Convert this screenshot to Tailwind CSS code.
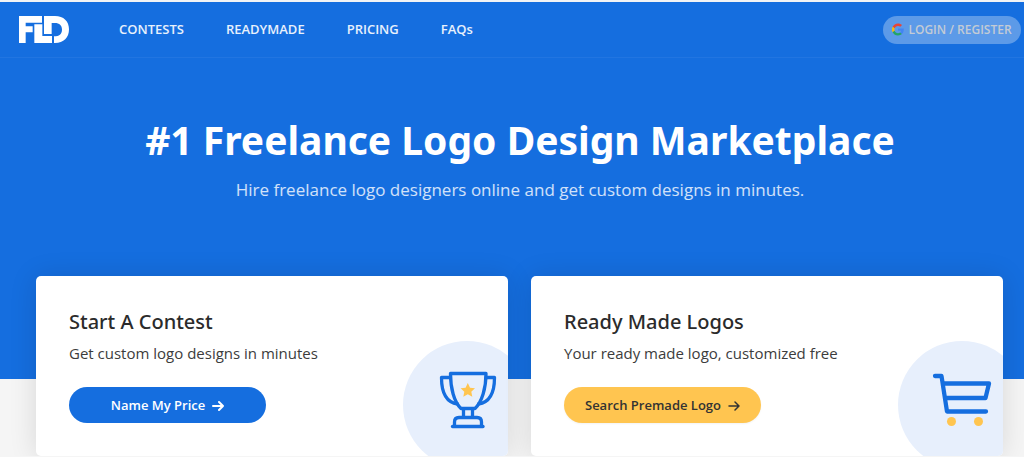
<!DOCTYPE html>
<html lang="en">
<head>
  <meta charset="UTF-8">
  <meta name="viewport" content="width=device-width, initial-scale=1.0">
  <title>#1 Freelance Logo Design Marketplace</title>
  <script src="https://cdn.jsdelivr.net/npm/@tailwindcss/browser@4"></script>
</head>
<body class="bg-[#f5f5f5] font-['Open_Sans','Noto_Sans',sans-serif] text-[#2b2b2b] overflow-x-hidden">
  <div class="bg-[#156edf] border-t-2 border-[#f1f3f5] pb-[103px]">
    <header class="flex items-center h-14 pl-[19px] pr-[3px] border-b border-white/5">
      <a href="#" aria-label="FLD home">
        <svg class="w-[50px] h-[27px]" viewBox="0 0 150 81" fill="#fff" aria-hidden="true">
          <path d="M0 0H69V20H20V31H41V49H20V81H0Z"/>
          <path d="M46 25H70V60H99V81H46Z"/>
          <path d="M75 0H108C134 0 150 16 150 40C150 65 134 81 108 81H105V61C121 61 129 54 129 41C129 28 121 21 108 21H98V54H75Z"/>
        </svg>
      </a>
      <nav class="flex gap-[42px] ml-[50px] text-[13px] font-semibold text-white/90">
        <a href="#">CONTESTS</a>
        <a href="#">READYMADE</a>
        <a href="#">PRICING</a>
        <a href="#">FAQs</a>
      </nav>
      <button type="button" class="flex items-center justify-center gap-1 ml-auto w-[138px] h-7 rounded-full bg-[#5c9ae8] text-xs font-semibold text-[#c3cbd5] whitespace-nowrap">
        <svg class="w-3 h-[13px]" viewBox="0 0 48 48" aria-hidden="true">
          <path fill="#ea4335" d="M24 0C14.600 0 6.500 5.400 2.600 13.200l8 6.200C12.400 13.700 17.700 9.500 24 9.500c3.500 0 6.700 1.200 9.200 3.600l6.900-6.900C35.900 2.400 30.500 0 24 0z"/>
          <path fill="#4285f4" d="M47 24.600c0-1.600-.2-3.100-.4-4.600H24v9h12.900c-.6 3-2.300 5.500-4.800 7.200l7.700 6C44.400 38 47 31.800 47 24.600z"/>
          <path fill="#fbbc05" d="M10.500 28.600c-.5-1.500-.8-3-.8-4.600s.3-3.100.8-4.600l-8-6.200C.9 16.500 0 20.100 0 24s.9 7.500 2.600 10.800z"/>
          <path fill="#23a566" d="M24 48c6.500 0 11.900-2.100 15.900-5.800l-7.700-6c-2.200 1.500-4.900 2.300-8.200 2.300-6.300 0-11.600-4.200-13.500-9.900l-8 6.200C6.500 42.600 14.600 48 24 48z"/>
        </svg>
        LOGIN / REGISTER
      </button>
    </header>

    <section class="pt-[55px] pb-[74px] pl-4 text-center">
      <h1 class="font-['Noto_Sans',sans-serif] text-[39px] leading-[54px] font-bold text-white">#1 Freelance Logo Design Marketplace</h1>
      <p class="mt-[11px] text-[17px] leading-6 text-white/80">Hire freelance logo designers online and get custom designs in minutes.</p>
    </section>
  </div>

  <main class="relative grid grid-cols-2 gap-[23px] -mt-[103px] pl-9 pr-[21px]">
    <section class="relative overflow-hidden rounded-[5px] bg-white px-[33px] pt-8 pb-[33px] shadow-[0_1px_28px_rgba(0,0,0,0.12)]">
      <h2 class="font-['Noto_Sans',sans-serif] text-xl leading-7 font-medium">Start A Contest</h2>
      <p class="mt-[5px] text-[15px] leading-6 text-[#3c3c3c]">Get custom logo designs in minutes</p>
      <button type="button" class="relative z-10 flex items-center justify-center gap-[7px] mt-[22px] w-[197px] h-9 pt-px rounded-full bg-[#156edf] text-[13px] font-semibold text-white">
        Name My Price
        <svg class="w-3 h-3" viewBox="0 0 12 12" fill="none" stroke="currentColor" stroke-width="2" stroke-linecap="round" stroke-linejoin="round" aria-hidden="true">
          <path d="M1 6H11M7 2L11 6L7 10"/>
        </svg>
      </button>
      <!-- trophy badge, cut off by the card edge -->
      <svg class="absolute -right-[23px] -bottom-[13px] w-32 h-32" viewBox="403 341 128 128" fill="none" stroke="#156edf" stroke-width="3.300" stroke-linecap="round" stroke-linejoin="round" aria-hidden="true">
        <circle cx="467" cy="405" r="64" fill="#e7effc" stroke="none"/>
        <path d="M450.500 373.500H486C486 388 482 402 475 408.500H461C454 402 450.500 388 450.500 373.500Z"/>
        <path d="M450 377.500H441.500C441.500 393 447 402.500 457.500 404"/>
        <path d="M486 377.500H494.500C494.500 393 489 402.500 478.500 404"/>
        <path d="M463.500 409V417M472.500 409V417"/>
        <path d="M454.500 426V422C454.500 419 456 417.500 459 417.500H477C480 417.500 481.500 419 481.500 422V426"/>
        <path d="M452.500 426.500H483"/>
        <path fill="#ffc550" stroke="none" d="M467.800 383L470 387.700L475 388.300L471.300 391.800L472.300 396.800L467.800 394.300L463.300 396.800L464.300 391.800L460.600 388.300L465.600 387.700Z"/>
      </svg>
    </section>

    <section class="relative overflow-hidden rounded-[5px] bg-white px-[33px] pt-8 pb-[33px] shadow-[0_1px_28px_rgba(0,0,0,0.12)]">
      <h2 class="font-['Noto_Sans',sans-serif] text-xl leading-7 font-medium">Ready Made Logos</h2>
      <p class="mt-[5px] text-[15px] leading-6 text-[#3c3c3c]">Your ready made logo, customized free</p>
      <button type="button" class="relative z-10 flex items-center justify-center gap-[7px] mt-[22px] w-[197px] h-9 pt-px rounded-full bg-[#ffc550] text-[13px] font-semibold text-[#333] shadow-xs">
        Search Premade Logo
        <svg class="w-3 h-3" viewBox="0 0 12 12" fill="none" stroke="currentColor" stroke-width="1.500" stroke-linecap="round" stroke-linejoin="round" aria-hidden="true">
          <path d="M1 6H11M7 2L11 6L7 10"/>
        </svg>
      </button>
      <!-- cart badge -->
      <svg class="absolute -right-[23px] -bottom-[13px] w-32 h-32" viewBox="898 341 128 128" fill="none" stroke="#156edf" stroke-width="4.300" stroke-linecap="round" stroke-linejoin="round" aria-hidden="true">
        <circle cx="962" cy="405" r="64" fill="#e7effc" stroke="none"/>
        <path d="M935 376H941.500L947 411.500H986"/>
        <path d="M944 383.500H989L985.500 398H946.500"/>
        <circle cx="951.500" cy="421.500" r="4.500" fill="#ffc550" stroke="none"/>
        <circle cx="978.500" cy="421.500" r="4.500" fill="#ffc550" stroke="none"/>
      </svg>
    </section>
  </main>
</body>
</html>
